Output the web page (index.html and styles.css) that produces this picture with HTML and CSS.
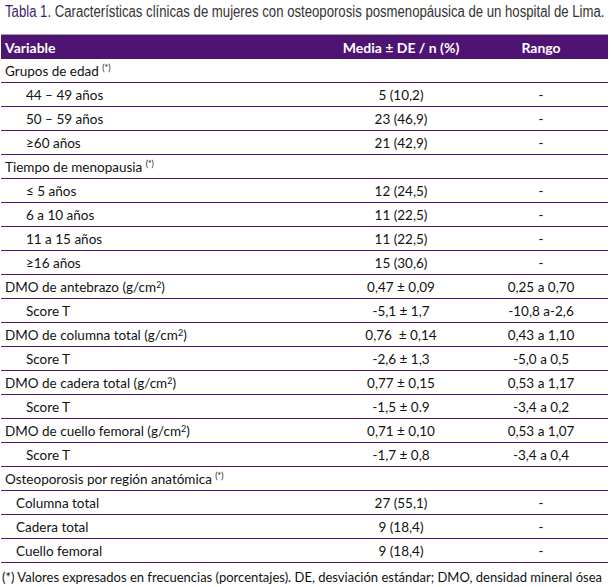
FILE: index.html
```html
<!DOCTYPE html>
<html lang="es">
<head>
<meta charset="utf-8">
<link rel="stylesheet" href="styles.css">
</head>
<body>
<div class="page">
  <p class="title"><span class="label">Tabla 1</span>. Características clínicas de mujeres con osteoporosis posmenopáusica de un hospital de Lima.</p>
  <table class="data">
    <colgroup><col class="c1"><col class="c2"><col class="c3"></colgroup>
    <thead>
      <tr><th class="var">Variable</th><th>Media ± DE / n (%)</th><th>Rango</th></tr>
    </thead>
    <tbody>
      <tr><td class="var">Grupos de edad <sup>(*)</sup></td><td></td><td></td></tr>
      <tr><td class="sub">44 – 49 años</td><td>5 (10,2)</td><td>-</td></tr>
      <tr><td class="sub">50 – 59 años</td><td>23 (46,9)</td><td>-</td></tr>
      <tr><td class="sub">≥60 años</td><td>21 (42,9)</td><td>-</td></tr>
      <tr><td class="var">Tiempo de menopausia <sup>(*)</sup></td><td></td><td></td></tr>
      <tr><td class="sub">≤ 5 años</td><td>12 (24,5)</td><td>-</td></tr>
      <tr><td class="sub">6 a 10 años</td><td>11 (22,5)</td><td>-</td></tr>
      <tr><td class="sub">11 a 15 años</td><td>11 (22,5)</td><td>-</td></tr>
      <tr><td class="sub">≥16 años</td><td>15 (30,6)</td><td>-</td></tr>
      <tr><td class="var">DMO de antebrazo (g/cm<sup class="sq">2</sup>)</td><td>0,47 ± 0,09</td><td>0,25 a 0,70</td></tr>
      <tr><td class="sub">Score T</td><td>-5,1 ± 1,7</td><td>-10,8 a-2,6</td></tr>
      <tr><td class="var">DMO de columna total (g/cm<sup class="sq">2</sup>)</td><td>0,76&nbsp; ± 0,14</td><td>0,43 a 1,10</td></tr>
      <tr><td class="sub">Score T</td><td>-2,6 ± 1,3</td><td>-5,0 a 0,5</td></tr>
      <tr><td class="var">DMO de cadera total (g/cm<sup class="sq">2</sup>)</td><td>0,77 ± 0,15</td><td>0,53 a 1,17</td></tr>
      <tr><td class="sub">Score T</td><td>-1,5 ± 0.9</td><td>-3,4 a 0,2</td></tr>
      <tr><td class="var">DMO de cuello femoral (g/cm<sup class="sq">2</sup>)</td><td>0,71 ± 0,10</td><td>0,53 a 1,07</td></tr>
      <tr><td class="sub">Score T</td><td>-1,7 ± 0,8</td><td>-3,4 a 0,4</td></tr>
      <tr><td class="var">Osteoporosis por región anatómica <sup>(*)</sup></td><td></td><td></td></tr>
      <tr><td class="sub2">Columna total</td><td>27 (55,1)</td><td>-</td></tr>
      <tr><td class="sub2">Cadera total</td><td>9 (18,4)</td><td>-</td></tr>
      <tr><td class="sub2">Cuello femoral</td><td>9 (18,4)</td><td>-</td></tr>
    </tbody>
  </table>
  <p class="note">(*) Valores expresados en frecuencias (porcentajes). DE, desviación estándar; DMO, densidad mineral ósea</p>
</div>
</body>
</html>
```
FILE: styles.css
```css
html, body {
  margin: 0;
  padding: 0;
  background: #ffffff;
}
.page {
  width: 611px;
  padding: 2px 0 0 1px;
  box-sizing: border-box;
}
.title {
  margin: 0 0 0 4px;
  font-family: "Liberation Sans", Arial, sans-serif;
  font-size: 16px;
  line-height: 20px;
  color: #333333;
  white-space: nowrap;
  transform: scaleX(0.822);
  transform-origin: 0 0;
}
.title .label {
  color: #3d1c6e;
}
.data {
  margin-top: 12px;
  width: 607px;
  border-collapse: collapse;
  table-layout: fixed;
  font-family: Lato, sans-serif;
  font-size: 13.5px;
  color: #111111;
}
.c1 { width: 327px; }
.c2 { width: 146px; }
.c3 { width: 134px; }
.data thead th {
  background: #4e1373;
  color: #ffffff;
  font-weight: bold;
  font-size: 14px;
  height: 24px;
  padding: 0;
  text-align: center;
  border-top: 1px solid #a8a0b0;
}
.data thead th.var {
  text-align: left;
  padding-left: 4px;
}
.data td {
  height: 23px;
  padding: 0;
  text-align: center;
  border-bottom: 1px solid #4e1373;
  white-space: nowrap;
}
.data td.var {
  text-align: left;
  padding-left: 4px;
}
.data td.sub {
  text-align: left;
  padding-left: 25px;
}
.data td.sub2 {
  text-align: left;
  padding-left: 15px;
}
sup {
  font-size: 8.5px;
  vertical-align: 5px;
  line-height: 0;
}
sup.sq {
  font-size: 9px;
  vertical-align: 4px;
}
.note {
  margin: 6px 0 0 1px;
  font-family: Lato, sans-serif;
  font-size: 13px;
  color: #111111;
  white-space: nowrap;
}
```
